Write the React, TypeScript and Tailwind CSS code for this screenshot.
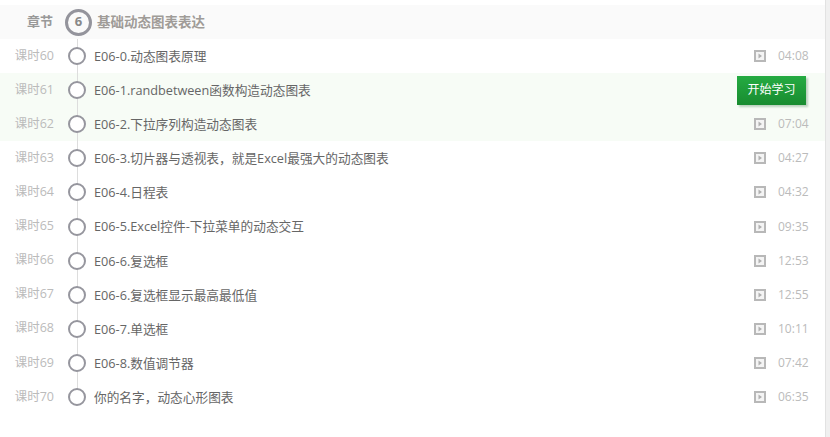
const LESSONS = [
  { no: 60, title: 'E06-0.动态图表原理', time: '04:08' },
  { no: 61, title: 'E06-1.randbetween函数构造动态图表', time: '', active: true },
  { no: 62, title: 'E06-2.下拉序列构造动态图表', time: '07:04', tint: true },
  { no: 63, title: 'E06-3.切片器与透视表，就是Excel最强大的动态图表', time: '04:27' },
  { no: 64, title: 'E06-4.日程表', time: '04:32' },
  { no: 65, title: 'E06-5.Excel控件-下拉菜单的动态交互', time: '09:35' },
  { no: 66, title: 'E06-6.复选框', time: '12:53' },
  { no: 67, title: 'E06-6.复选框显示最高最低值', time: '12:55' },
  { no: 68, title: 'E06-7.单选框', time: '10:11' },
  { no: 69, title: 'E06-8.数值调节器', time: '07:42' },
  { no: 70, title: '你的名字，动态心形图表', time: '06:35' },
];

function PlayBox() {
  return (
    <svg width="12" height="12" viewBox="0 0 12 12" className="shrink-0">
      <rect x="1" y="1" width="10" height="10" fill="#f4f4f4" stroke="#b8b8b8" strokeWidth="2" />
      <path d="M4.5 3.5 L8 6 L4.5 8.5 Z" fill="#b0b0b0" />
    </svg>
  );
}

export default function App() {
  return (
    <div className="flex h-[437px] w-[830px] overflow-hidden bg-white font-['Open_Sans','Noto_Sans_CJK_SC',sans-serif]">
      <div className="w-[825px] pt-[5px]">
        {/* chapter header */}
        <div className="flex h-[34px] items-center bg-[#fafafa]">
          <span className="w-[53px] text-right text-[13px] font-bold text-[#999]">章节</span>
          <span className="ml-[12px] flex h-[27px] w-[27px] items-center justify-center rounded-full border-[3px] border-[#94949c] text-[13px] font-bold text-[#888]">
            6
          </span>
          <span className="ml-[5px] text-[13.5px] font-bold text-[#a09c98]">基础动态图表表达</span>
        </div>

        {/* lesson list */}
        <div className="relative">
          <div className="absolute bottom-[18px] left-[77px] top-0 w-px bg-[#ddd]" />
          {LESSONS.map((item) => (
            <div
              key={item.no}
              className={`flex h-[34.1px] items-center ${item.active || item.tint ? 'bg-[#f7fcf6]' : ''}`}
            >
              <span className="w-[54px] shrink-0 text-right text-[12.5px] text-[#bbb]">课时{item.no}</span>
              <span className="relative ml-[14px] h-[18px] w-[18px] shrink-0 rounded-full border-2 border-[#96969e] bg-white" />
              <span className="ml-[8px] flex-1 truncate pt-px text-[12.7px] text-[#666]">{item.title}</span>
              {item.active ? (
                <button className="mr-[19px] h-[29px] w-[69px] bg-gradient-to-b from-[#25ab42] to-[#188c30] text-xs text-white shadow-[2px_2px_2px_rgba(0,80,20,0.25)]">
                  开始学习
                </button>
              ) : (
                <>
                  <PlayBox />
                  <span className="ml-[12px] mr-[18px] w-[29px] text-xs text-[#bbb]">{item.time}</span>
                </>
              )}
            </div>
          ))}
        </div>
      </div>
      {/* page edge */}
      <div className="w-[5px] border-l border-[#e2e2e2] bg-[#f0f0f0]" />
    </div>
  );
}
